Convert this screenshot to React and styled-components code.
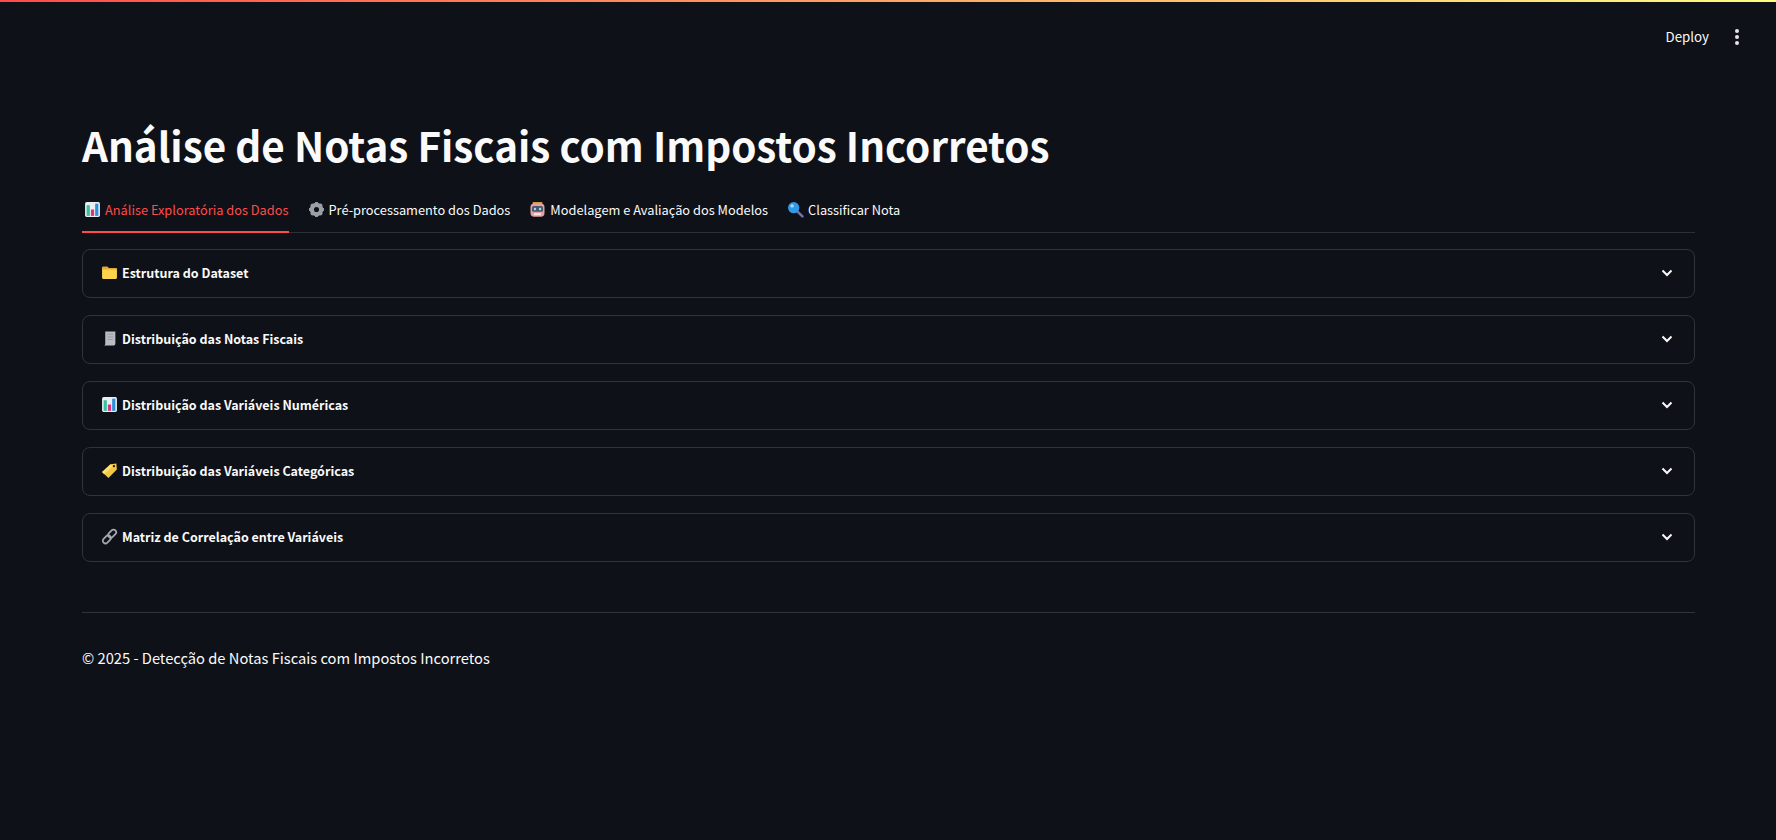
import React from "react";
import styled, {createGlobalStyle} from "styled-components";

const GlobalStyle = createGlobalStyle`
    html, body {
        margin: 0;
        padding: 0;
        background-color: #0e1117;
    }
    body {
        font-family: "Noto Sans CJK SC", "Noto Sans", sans-serif;
        color: #fafafa;
    }
`;

const Page = styled.div`
    height: 840px;
    overflow: hidden;
    background-color: #0e1117;
`;

const TopBar = styled.div`
    height: 2px;
    background: linear-gradient(90deg, #ff4b4b, #fffd80);
`;

const Header = styled.header`
    height: 70px;
    padding-right: 37px;
    display: flex;
    justify-content: flex-end;
    align-items: center;
    gap: 26px;
`;

const Deploy = styled.span`
    font-size: 13.3px;
    line-height: 20px;
    color: #fafafa;
`;

const MenuDots = styled.span`
    width: 4px;
    display: flex;
    flex-direction: column;
    gap: 2px;

    i {
        width: 4px;
        height: 4px;
        border-radius: 50%;
        background-color: #e6e6e6;
    }
`;

const Main = styled.main`
    padding: 43px 81px 0 82px;
`;

const Title = styled.h1`
    margin: 0;
    font-size: 40.4px;
    line-height: 60px;
    font-weight: 700;
    color: #fafafa;
`;

const TabList = styled.div`
    margin-top: 14px;
    display: flex;
    gap: 17px;
    border-bottom: 1px solid #2d3036;
`;

const Tab = styled.div`
    height: 44px;
    display: flex;
    align-items: center;
    gap: 4px;
    box-sizing: border-box;
    margin-bottom: -1px;
    padding: 0 0 2px 2px;
    font-size: 12.8px;
    white-space: nowrap;
    color: ${props => (props.$active ? "#ff4b4b" : "#fafafa")};
    border-bottom: 2px solid ${props => (props.$active ? "#ff4b4b" : "transparent")};
`;

const Accordion = styled.div`
    margin-top: 16px;
    display: flex;
    flex-direction: column;
    gap: 17px;
`;

const Expander = styled.div`
    height: 49px;
    box-sizing: border-box;
    padding: 0 19px 2px 18px;
    display: flex;
    align-items: center;
    gap: 4px;
    border: 1px solid #30333a;
    border-radius: 8px;
`;

const ExpanderLabel = styled.span`
    flex: 1;
    font-size: 12.5px;
    font-weight: 600;
    color: #fafafa;
`;

const Divider = styled.hr`
    margin: 50px 0 0;
    border: 0;
    border-top: 1px solid #30333a;
`;

const Footer = styled.p`
    margin: 33px 0 0;
    font-size: 14.7px;
    line-height: 24px;
    color: #fafafa;
`;

const Emoji = styled.svg`
    width: 17px;
    height: 17px;
    flex: none;
`;

const ChartIcon = () => (
    <Emoji viewBox="0 0 16 16">
        <rect x="1" y="1" width="14" height="14" rx="1.5" fill="#e8eef2"/>
        <rect x="2.5" y="4" width="3" height="10" fill="#35c0a0"/>
        <rect x="6.5" y="8" width="3" height="6" fill="#e0307a"/>
        <rect x="10.5" y="2.5" width="3" height="11.5" fill="#2f8fd8"/>
    </Emoji>
);

const GearIcon = () => (
    <Emoji viewBox="0 0 16 16">
        <circle cx="8" cy="8" r="4.4" fill="none" stroke="#9aa0a6" strokeWidth="4"/>
        <path d="M8 1v3M8 12v3M1 8h3M12 8h3M3 3l2.1 2.1M10.9 10.9L13 13M3 13l2.1-2.1M10.9 5.1L13 3"
              stroke="#9aa0a6" strokeWidth="2.6"/>
    </Emoji>
);

const RobotIcon = () => (
    <Emoji viewBox="0 0 16 16">
        <rect x="3.5" y="1" width="9" height="2.4" fill="#d9a441"/>
        <rect x="1.4" y="2.4" width="13.2" height="12.4" rx="3.5" fill="#e8a0a2"/>
        <rect x="2.8" y="4.8" width="10.4" height="5.4" rx="1.6" fill="#4a5a6e"/>
        <circle cx="5.6" cy="7.5" r="1.1" fill="#a9dcf2"/>
        <circle cx="10.4" cy="7.5" r="1.1" fill="#a9dcf2"/>
        <rect x="4.6" y="11.4" width="6.8" height="2" rx=".8" fill="#f3e4e4"/>
    </Emoji>
);

const SearchIcon = () => (
    <Emoji viewBox="0 0 16 16">
        <path d="M9.5 9.5l5 5" stroke="#7b6fb0" strokeWidth="2.4" strokeLinecap="round"/>
        <circle cx="6.3" cy="6.3" r="5.3" fill="#2f9be8"/>
        <circle cx="4.8" cy="4.6" r="1.6" fill="#a8dcfa"/>
    </Emoji>
);

const FolderIcon = () => (
    <Emoji viewBox="0 0 16 16">
        <path d="M1 3.5a1 1 0 0 1 1-1h4l1.4 1.6H14a1 1 0 0 1 1 1V13a1 1 0 0 1-1 1H2a1 1 0 0 1-1-1z" fill="#fdd34e"/>
        <path d="M1 3.5a1 1 0 0 1 1-1h4l1.4 1.6H15v1H1z" fill="#e8a832"/>
    </Emoji>
);

const ScrollIcon = () => (
    <Emoji viewBox="0 0 16 16">
        <path d="M4 1.5h9.5v11.5a1.5 1.5 0 0 1-1.5 1.5H3a1.5 1.5 0 0 0 1-1.5z" fill="#b9bdc2"/>
        <path d="M6 4h5.5M6 6.5h5.5M6 9h5.5" stroke="#9a9ea4" strokeWidth="1"/>
    </Emoji>
);

const TagIcon = () => (
    <Emoji viewBox="0 0 16 16">
        <path d="M1 9.5L9 2l5.5-.5.4 5.6L7 15z" fill="#f5c93f"/>
        <path d="M1 9.5L9 2l2 2-8 7.5z" fill="#fbe07a"/>
        <circle cx="12.2" cy="3.9" r="1" fill="#0e1117"/>
    </Emoji>
);

const LinkIcon = () => (
    <Emoji viewBox="0 0 16 16">
        <g fill="none" stroke="#a4a8ae" strokeWidth="1.7">
            <rect x="8" y="1" width="5" height="8.6" rx="2.5" transform="rotate(45 10.5 5.3)"/>
            <rect x="3" y="6.4" width="5" height="8.6" rx="2.5" transform="rotate(45 5.5 10.7)"/>
        </g>
    </Emoji>
);

const Chevron = styled.svg`
    width: 16px;
    height: 16px;
    flex: none;
    fill: none;
    stroke: #fafafa;
    stroke-width: 2;
`;

const tabs = [
    {label: "Análise Exploratória dos Dados", Icon: ChartIcon, active: true},
    {label: "Pré-processamento dos Dados", Icon: GearIcon},
    {label: "Modelagem e Avaliação dos Modelos", Icon: RobotIcon},
    {label: "Classificar Nota", Icon: SearchIcon},
];

const sections = [
    {label: "Estrutura do Dataset", Icon: FolderIcon},
    {label: "Distribuição das Notas Fiscais", Icon: ScrollIcon},
    {label: "Distribuição das Variáveis Numéricas", Icon: ChartIcon},
    {label: "Distribuição das Variáveis Categóricas", Icon: TagIcon},
    {label: "Matriz de Correlação entre Variáveis", Icon: LinkIcon},
];

const App = () => {
    return (
        <Page>
            <GlobalStyle/>
            <TopBar/>
            <Header>
                <Deploy>Deploy</Deploy>
                <MenuDots><i/><i/><i/></MenuDots>
            </Header>
            <Main>
                <Title>Análise de Notas Fiscais com Impostos Incorretos</Title>
                <TabList>
                    {tabs.map(({label, Icon, active}) => (
                        <Tab key={label} $active={active}>
                            <Icon/>
                            {label}
                        </Tab>
                    ))}
                </TabList>
                <Accordion>
                    {sections.map(({label, Icon}) => (
                        <Expander key={label}>
                            <Icon/>
                            <ExpanderLabel>{label}</ExpanderLabel>
                            <Chevron viewBox="0 0 16 16">
                                <path d="M3.5 5.5L8 10l4.5-4.5"/>
                            </Chevron>
                        </Expander>
                    ))}
                </Accordion>
                <Divider/>
                <Footer>© 2025 - Detecção de Notas Fiscais com Impostos Incorretos</Footer>
            </Main>
        </Page>
    );
};

export default App;
